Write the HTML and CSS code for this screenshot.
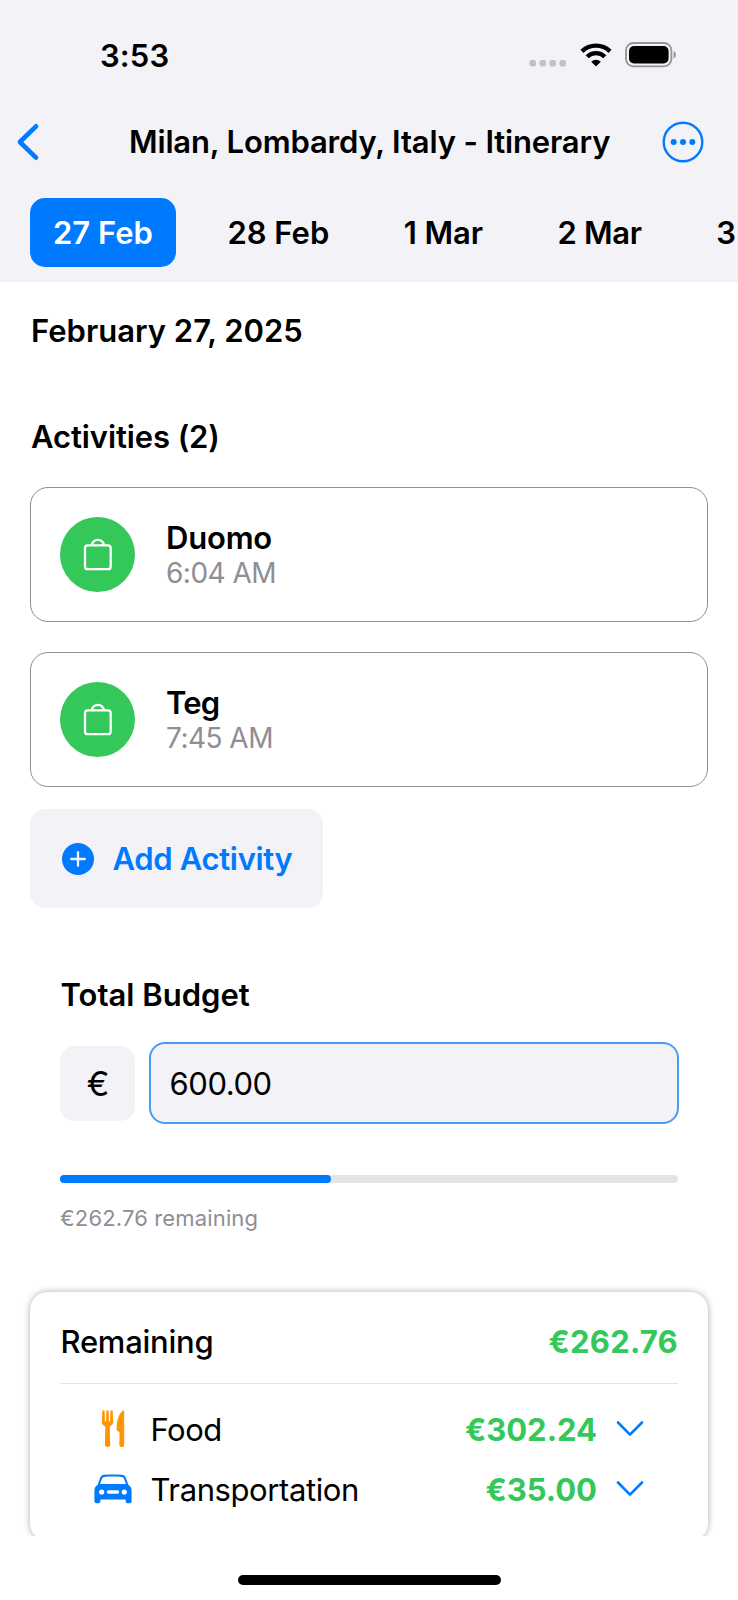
FILE: index.html
```html
<!DOCTYPE html>
<html lang="en">
<head>
<meta charset="utf-8">
<title>Milan, Lombardy, Italy - Itinerary</title>
<link rel="stylesheet" href="styles.css">
</head>
<body>
<div class="screen">
  <header class="header">
    <div class="status">
      <span class="t time">3:53</span>
      <div class="status-icons">
        <svg class="dots" width="38" height="8" viewBox="0 0 38 8" fill="#c2c2c6"><rect x="0.5" y="1" width="6.5" height="6.5" rx="2.2"/><rect x="10.5" y="1" width="6.5" height="6.5" rx="2.2"/><rect x="20.5" y="1" width="6.5" height="6.5" rx="2.2"/><rect x="30.5" y="1" width="6.5" height="6.5" rx="2.2"/></svg>
        <svg class="wifi" width="32" height="24" viewBox="0 0 32 24"><g fill="none" stroke="#000" stroke-width="4.3"><path d="M2 8.400A20 20 0 0 1 30 8.400"/><path d="M7.200 13.800A12.500 12.500 0 0 1 24.800 13.800"/></g><path d="M16 23.600 11.200 18.700a6.800 6.800 0 0 1 9.600 0Z"/></svg>
        <svg class="battery" width="52" height="26" viewBox="0 0 52 26"><rect x="1" y="1" width="45.4" height="23.4" rx="7.4" fill="none" stroke="#949498" stroke-width="1.8"/><rect x="4" y="4" width="39.6" height="17.4" rx="5"/><path d="M48.6 9v7.6a4.2 4.2 0 0 0 0-7.6Z" fill="#949498"/></svg>
      </div>
    </div>
    <div class="nav">
      <svg class="back" width="24" height="38" viewBox="0 0 24 38" fill="none" stroke="#007aff" stroke-width="4.600" stroke-linecap="round" stroke-linejoin="round"><path d="M20 3.300 3.900 19 20 34.700"/></svg>
      <h1 class="t title">Milan, Lombardy, Italy - Itinerary</h1>
      <svg class="more" width="42" height="42" viewBox="0 0 42 42"><circle cx="21" cy="21" r="19.300" fill="none" stroke="#007aff" stroke-width="2.400"/><g fill="#007aff"><circle cx="11.700" cy="21" r="3"/><circle cx="21" cy="21" r="3"/><circle cx="30.300" cy="21" r="3"/></g></svg>
    </div>
    <nav class="tabs">
      <a class="tab tab-active"><span class="t">27 Feb</span></a>
      <a class="tab"><span class="t tab-feb">28 Feb</span></a>
      <a class="tab"><span class="t tab-mar1">1 Mar</span></a>
      <a class="tab"><span class="t tab-mar2">2 Mar</span></a>
      <a class="tab"><span class="t">3</span></a>
    </nav>
  </header>
  <main class="content">
    <h2 class="date"><span class="t">February 27, 2025</span></h2>
    <h3 class="activities-title"><span class="t">Activities (2)</span></h3>
    <div class="activities">
      <article class="activity">
        <span class="badge"><svg width="30" height="34" viewBox="0 0 30 34" fill="none" stroke="#fff" stroke-width="2.300"><rect x="2" y="7.400" width="25.700" height="23.800" rx="2.800"/><path d="M9 7.400a5.900 5.600 0 0 1 11.800 0"/></svg></span>
        <div class="activity-info"><span class="t name name-duomo">Duomo</span><span class="t when">6:04 AM</span></div>
      </article>
      <article class="activity">
        <span class="badge"><svg width="30" height="34" viewBox="0 0 30 34" fill="none" stroke="#fff" stroke-width="2.300"><rect x="2" y="7.400" width="25.700" height="23.800" rx="2.800"/><path d="M9 7.400a5.900 5.600 0 0 1 11.800 0"/></svg></span>
        <div class="activity-info"><span class="t name name-teg">Teg</span><span class="t when">7:45 AM</span></div>
      </article>
    </div>
    <a class="add"><svg width="32" height="32" viewBox="0 0 32 32"><circle cx="16" cy="16" r="16" fill="#007aff"/><path d="M16 9.200v13.600M9.200 16h13.600" stroke="#f2f2f7" stroke-width="2.300" stroke-linecap="round"/></svg><span class="t add-text">Add Activity</span></a>
    <section class="budget">
      <h3 class="budget-title"><span class="t">Total Budget</span></h3>
      <div class="budget-row">
        <span class="currency">€</span>
        <div class="amount"><span class="t">600.00</span></div>
      </div>
      <div class="progress"><div class="progress-fill" style="width:43.85%"></div></div>
      <p class="caption"><span class="t">€262.76 remaining</span></p>
    </section>
    <section class="summary">
      <div class="summary-head"><span class="t remaining">Remaining</span><span class="t money money-total">€262.76</span></div>
      <div class="line">
        <span class="line-icon"><svg width="24" height="38" viewBox="0 0 24 38" fill="#ff9500"><path d="M1.300 1.500a1.150 1.150 0 0 1 2.300 0L3.900 11c0 .7 1.200.7 1.200 0L5.300 1.500a1.200 1.200 0 0 1 2.400 0L7.900 11c0 .7 1.200.7 1.200 0l.3-9.500a1.150 1.150 0 0 1 2.300 0l.5 10.200c.1 1.900-.8 3.200-2.300 4-.8.4-1.100.9-1.100 1.600l.4 17a2.650 2.650 0 0 1-5.300 0l.4-17c0-.7-.4-1.200-1.100-1.600C1.600 14.900.7 13.600.8 11.700Z"/><path d="M23.200 1.600v33.100a2.400 2.400 0 0 1-4.900 0l.3-11.200c0-1-.3-1.500-1.200-1.900-1.300-.5-1.800-1.200-1.800-2.500C15.700 11 17.600 4.200 21.400.9c.9-.8 1.800-.4 1.800.7Z"/></svg></span>
        <span class="label"><span class="t label-food">Food</span></span>
        <span class="t money">€302.24</span>
        <svg class="chev" width="28" height="18" viewBox="0 0 28 18" fill="none" stroke="#007aff" stroke-width="2.600" stroke-linecap="round" stroke-linejoin="round"><path d="M2 2.500 14 14.600 26 2.500"/></svg>
      </div>
      <div class="line">
        <span class="line-icon"><svg width="38" height="30" viewBox="0 0 38 30"><path fill="#007aff" fill-rule="evenodd" d="M3.700 10.800 6 4.200C6.800 2 8 1 10.200.8c5.500-.5 12.100-.5 17.600 0 2.200.2 3.400 1.200 4.200 3.400l2.300 6.600c2.500 1.600 3.300 3.500 3.300 6.500V27.300a2 2 0 0 1-2 2h-2a2 2 0 0 1-2-2V25.400H6.400v1.900a2 2 0 0 1-2 2h-2a2 2 0 0 1-2-2V17.300c0-3 .8-4.900 3.300-6.500ZM6.100 10h25.800L30 4.800c-.5-1.300-1.100-1.800-2.400-1.900-5.300-.5-11.900-.5-17.200 0C9.100 3 8.500 3.500 8 4.800ZM7.700 15.400a2.600 2.600 0 1 0 0 5.200 2.600 2.600 0 0 0 0-5.200Zm22.600 0a2.600 2.600 0 1 0 0 5.200 2.600 2.600 0 0 0 0-5.200ZM14.500 16.300a1.700 1.700 0 0 0 0 3.400h9a1.700 1.700 0 0 0 0-3.400Z"/></svg></span>
        <span class="label"><span class="t label-transport">Transportation</span></span>
        <span class="t money">€35.00</span>
        <svg class="chev" width="28" height="18" viewBox="0 0 28 18" fill="none" stroke="#007aff" stroke-width="2.600" stroke-linecap="round" stroke-linejoin="round"><path d="M2 2.500 14 14.600 26 2.500"/></svg>
      </div>
    </section>
  </main>
  <footer class="home"><div class="home-bar"></div></footer>
</div>
</body>
</html>
```
FILE: styles.css
```css
* { box-sizing: border-box; }
body { margin: 0; font-family: Inter, sans-serif; font-size: 31px; color: #000; background: #fff; }
h1, h2, h3, p { margin: 0; font-size: inherit; font-weight: 600; }
svg { display: block; flex: none; }
.t { white-space: nowrap; }
.screen { width: 738px; height: 1600px; display: flex; flex-direction: column; overflow: hidden; }
.header { height: 282px; background: #f2f2f7; flex: none; overflow: hidden; }
.status { height: 110px; padding: 0 61px 0 100px; display: flex; justify-content: space-between; align-items: center; }
.time { font-weight: 600; letter-spacing: .1px; }
.status-icons { display: flex; align-items: center; }
.dots { margin: 16px 13px 0 0; }
.wifi { margin-right: 13px; }
.nav { height: 64px; padding: 0 34px 0 16px; display: flex; align-items: center; }
.title { margin: 0 auto 0 89px; padding-bottom: 2px; letter-spacing: -.155px; }
.tabs { display: flex; gap: 28.5px; padding: 24px 0 0 30px; }
.tab { height: 69px; padding: 0 23px; border-radius: 15px; display: flex; align-items: center; flex: none; font-weight: 600; }
.tab-active { background: #007aff; color: #fff; }
.tab-mar1 { letter-spacing: -.1px; }
.tab-mar2 { letter-spacing: -.3px; }
.content { height: 1254px; overflow: hidden; flex: none; padding: 0 30px; }
.date { height: 98px; line-height: 98px; padding-left: 1px; }
.activities-title { height: 107px; line-height: 114px; padding-left: 1px; letter-spacing: -.1px; }
.activities { display: flex; flex-direction: column; gap: 30px; }
.activity { height: 135px; border: 1px solid #8e8e93; border-radius: 18px; display: flex; align-items: center; gap: 31px; padding: 0 29px; }
.badge { width: 75px; height: 75px; border-radius: 50%; background: #34c759; display: flex; align-items: center; justify-content: center; }
.activity-info { display: flex; flex-direction: column; }
.name { font-weight: 600; line-height: 37px; }
.name-duomo { letter-spacing: -.2px; }
.name-teg { letter-spacing: -.8px; }
.when { font-size: 28px; line-height: 34px; color: #8e8e93; letter-spacing: -.52px; }
.add { width: 293px; height: 99px; margin-top: 22px; border-radius: 15px; background: #f2f2f7; color: #007aff; font-weight: 600; display: flex; align-items: center; gap: 18.500px; padding-left: 32px; }
.add-text { letter-spacing: -.33px; }
.budget { padding: 69px 30px 0; }
.budget-title { height: 65px; line-height: 35px; padding-left: .5px; }
.budget-row { display: flex; align-items: center; gap: 14px; margin-right: -1px; }
.currency { width: 75px; height: 75px; border-radius: 15px; background: #f2f2f7; font-size: 34px; font-weight: 400; padding-left: 1px; display: flex; align-items: center; justify-content: center; }
.amount { flex: 1; height: 82px; border: 2px solid #4a9bf3; border-radius: 16px; background: #f2f2f7; display: flex; align-items: center; padding-left: 18.500px; letter-spacing: -.45px; }
.progress { height: 8px; margin-top: 51px; border-radius: 4px; background: #e4e4e5; }
.progress-fill { height: 8px; border-radius: 4px; background: #007aff; }
.caption { font-size: 22px; font-weight: 400; color: #8e8e93; line-height: 30px; margin-top: 20px; letter-spacing: .15px; }
.summary { height: 249px; margin-top: 59px; border-radius: 18px; box-shadow: 0 0 7px rgba(0,0,0,.33); padding: 0 30px; background: #fff; }
.summary-head { height: 92px; padding-top: 7px; border-bottom: 1px solid #e3e3e5; display: flex; align-items: center; justify-content: space-between; font-weight: 500; margin-bottom: 15px; }
.remaining { padding-left: .5px; letter-spacing: -.25px; }
.money { color: #34c759; font-weight: 700; }
.money-total { letter-spacing: .25px; }
.line { height: 60px; display: flex; align-items: center; padding-right: 34px; }
.line-icon { width: 38px; margin: 0 18.500px 0 34px; display: flex; justify-content: center; }
.label { flex: 1; }
.label-food { letter-spacing: -.5px; }
.label-transport { letter-spacing: -.4px; }
.chev { margin-left: 19px; }
.home { flex: 1; display: flex; justify-content: center; padding-top: 39px; }
.home-bar { width: 263px; height: 10px; border-radius: 5px; background: #000; }
```
